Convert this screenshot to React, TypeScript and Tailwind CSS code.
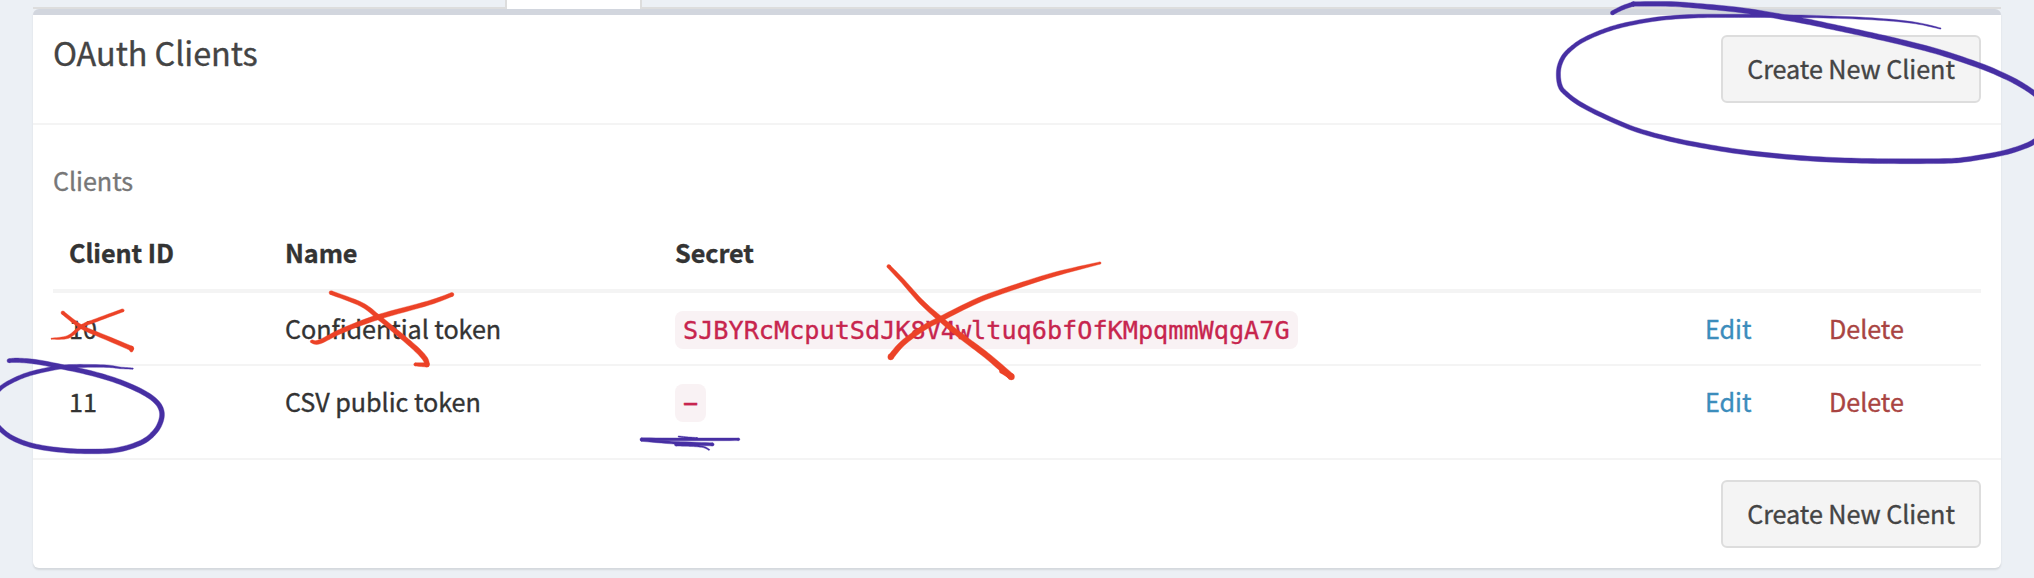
import React from "react";

type Point = [x: number, y: number, width: number];

const PURPLE = "#472fa3";
const RED = "#ec4227";

// Freehand strokes of varying thickness, each point being x, y and pen width.
const strokes: { color: string; points: Point[] }[] = [
  { color: PURPLE, points: [[1612.4, 12.9, 4], [1622, 8, 4.2], [1633.3, 4, 4.4]] },
  {
    color: PURPLE,
    points: [
      [1633.3, 4, 4.4], [1670.7, 4, 4.8], [1707, 6.7, 5], [1747, 11, 5.2], [1800.7, 20.3, 5.4], [1834, 27.2, 5.4],
      [1867, 34.3, 5.4], [1900.7, 42, 5.4], [1940.7, 52.5, 5.4], [1980.7, 66, 5.4], [2000.7, 74.3, 5.2],
      [2017.3, 82.5, 5.2], [2034, 93.3, 5], [2046, 105, 5], [2050, 118, 5], [2045, 132, 5], [2034, 141.7, 5],
      [2020.7, 147.7, 4.8], [2000.7, 153.5, 4.8], [1967, 159.3, 4.8], [1944, 161, 4.8], [1894, 161.2, 4.8],
      [1850.7, 160.5, 4.8], [1800.7, 158, 4.8], [1744, 152.3, 4.6], [1700.7, 145.4, 4.6], [1667.3, 138.5, 4.4],
      [1634, 129, 4.4], [1602, 115.3, 4.4], [1579, 103.3, 4.4], [1564.7, 92.3, 4.4], [1560, 85.5, 4.4],
      [1558.4, 75, 4.2], [1559.7, 65, 4.2], [1564.7, 55, 4.2], [1574, 46.2, 4], [1584, 39.7, 4], [1600.7, 32.2, 4],
      [1622.3, 25.4, 4], [1657, 19, 3.8], [1694, 16.2, 3.6], [1730, 15.9, 3.2], [1766, 16, 3], [1823.6, 16.8, 2.3],
      [1878, 19.2, 1.9], [1915.5, 23, 1.6], [1940.4, 28.5, 1.2],
    ],
  },
  {
    color: PURPLE,
    points: [
      [9, 360.7, 4], [18, 360.3, 4.4], [37, 362, 4.6], [63, 367, 4.6], [90, 372.9, 4.8], [117, 380.9, 4.8],
      [140, 390.7, 4.8], [154.5, 400, 4.8], [161.2, 409.5, 4.8], [161.2, 420, 4.8], [155, 431.7, 4.8],
      [141.7, 442.3, 4.8], [117, 450, 4.8], [88, 451.4, 4.6], [60, 450, 4.6], [33, 445.7, 4.6], [13, 438.3, 4.6],
      [0, 428.5, 4.4], [-9, 415, 4.4], [-9, 400, 4.2], [0, 388.7, 4], [12, 381, 4], [30, 373.7, 4],
      [57, 367.7, 3.8], [76.7, 366, 3.2], [106.7, 366.2, 2.4], [120, 367.8, 1.7], [132.7, 368.6, 1.2],
    ],
  },
  { color: PURPLE, points: [[641.5, 439.3, 3], [690, 439.4, 2.8], [738.5, 439.3, 2.6]] },
  { color: PURPLE, points: [[641.5, 440.2, 2.2], [676, 442.8, 2.8], [712.5, 444.4, 3.2]] },
  { color: PURPLE, points: [[678.7, 436.5, 1.1], [687, 437.6, 1.6], [697, 438.5, 2]] },
  { color: PURPLE, points: [[676, 444.6, 3], [690, 445.2, 2.4], [703, 446.8, 1.6], [709, 449.7, 1.2]] },
  { color: RED, points: [[62.7, 312.7, 3.4], [81.7, 327, 3.8], [106.7, 337.9, 4.2], [131.5, 348.4, 4.6]] },
  { color: RED, points: [[131.5, 348.4, 4], [131.4, 350.6, 3]] },
  { color: RED, points: [[51.5, 338.7, 1], [68.3, 336.8, 3], [81.7, 326.3, 3.2], [93.3, 321.3, 3.2], [122.7, 310.4, 3]] },
  { color: RED, points: [[331, 292.7, 3.8], [361.7, 304.6, 4.2], [379, 317.7, 4.6], [400, 335, 5], [416.7, 349.5, 5.2], [425, 358.7, 5.2], [427.2, 364.5, 4.6]] },
  { color: RED, points: [[415.4, 364.4, 3.2], [427, 364.9, 4.4]] },
  { color: RED, points: [[311.8, 341.4, 3], [319.6, 341.8, 4.2], [343, 330.3, 4.6], [378.6, 317, 5], [428.6, 303, 4.4], [452, 294.5, 3.8]] },
  { color: RED, points: [[888.7, 266.3, 3.6], [903.3, 281.7, 4.2], [921.7, 302.3, 4.8], [940.7, 319.3, 5.2], [960, 335.3, 5.6], [986.7, 355.5, 6], [1011.3, 376.7, 6.4]] },
  { color: RED, points: [[1001.5, 371, 4.4], [1009, 375.5, 4.4]] },
  { color: RED, points: [[890.7, 357, 5.8], [903, 343, 5.4], [923, 328.3, 5.2], [940.7, 318.8, 5], [976.7, 301, 5], [1006.7, 289.8, 4.8], [1053.3, 274.7, 4.2], [1100, 263, 2.2]] },
];

function spline(a: number, b: number, c: number, d: number, t: number) {
  return 0.5 * (2 * b + (c - a) * t + (2 * a - 5 * b + 4 * c - d) * t * t + (3 * b - a - 3 * c + d) * t * t * t);
}

function outline(points: Point[]) {
  const samples: Point[] = [];
  const last = points.length - 1;
  for (let i = 0; i < last; i++) {
    const p0 = points[Math.max(0, i - 1)];
    const p1 = points[i];
    const p2 = points[i + 1];
    const p3 = points[Math.min(last, i + 2)];
    for (let s = 0; s < 8; s++) {
      const t = s / 8;
      samples.push([
        spline(p0[0], p1[0], p2[0], p3[0], t),
        spline(p0[1], p1[1], p2[1], p3[1], t),
        p1[2] + (p2[2] - p1[2]) * t,
      ]);
    }
  }
  samples.push(points[last]);
  const left: string[] = [];
  const right: string[] = [];
  samples.forEach(([x, y, w], i) => {
    const before = samples[Math.max(0, i - 1)];
    const after = samples[Math.min(samples.length - 1, i + 1)];
    const dx = after[0] - before[0];
    const dy = after[1] - before[1];
    const len = Math.hypot(dx, dy) || 1;
    const nx = (-dy / len) * (w / 2);
    const ny = (dx / len) * (w / 2);
    left.push(`${(x + nx).toFixed(2)} ${(y + ny).toFixed(2)}`);
    right.unshift(`${(x - nx).toFixed(2)} ${(y - ny).toFixed(2)}`);
  });
  return `M${left.concat(right).join("L")}Z`;
}

function Markup() {
  return (
    <svg className="pointer-events-none absolute inset-0" width="2034" height="578" viewBox="0 0 2034 578" aria-hidden="true">
      {strokes.map(({ color, points }, i) => {
        const end = points[points.length - 1];
        return (
          <g key={i} fill={color} stroke={color} strokeWidth="0.4" strokeLinejoin="round">
            <path d={outline(points)} />
            <circle cx={points[0][0]} cy={points[0][1]} r={points[0][2] / 2} />
            <circle cx={end[0]} cy={end[1]} r={end[2] / 2} />
          </g>
        );
      })}
    </svg>
  );
}

function CreateButton() {
  return (
    <button className="flex h-[68px] w-[260px] items-start justify-center rounded-md border-2 border-[#ddd] bg-[#f4f4f4] pt-[11px] leading-[40px] whitespace-nowrap text-[#444]">
      Create New Client
    </button>
  );
}

const clients = [
  { id: "10", name: "Confidential token", secret: "SJBYRcMcputSdJK8V4wltuq6bfOfKMpqmmWqgA7G" },
  { id: "11", name: "CSV public token", secret: "−" },
];

const columns = "grid grid-cols-[216px_390px_1030px_124px_1fr] pl-4 pt-[15px]";

export default function App() {
  return (
    <div className="relative h-[578px] w-[2034px] overflow-hidden bg-[#ecf0f5] px-[33px] font-['Noto_Sans_CJK_JP','Noto_Sans',sans-serif] text-[25.2px] leading-[40px] tracking-[-0.06px] text-[#333] [-webkit-text-stroke:0.35px_currentColor]">
      <div className="flex h-[9px]">
        <div className="w-[472px] border-b-2 border-[#ddd]" />
        <div className="w-[137px] border-x-2 border-[#ddd] bg-white" />
        <div className="flex-1 border-b-2 border-[#ddd]" />
      </div>

      <section className="h-[559px] rounded-md border-t-[6px] border-[#d2d6de] bg-white shadow-[0_2px_2px_rgba(0,0,0,0.1)]">
        <header className="flex h-[110px] items-start justify-between border-b-2 border-[#f4f4f4] px-5 pt-5">
          <h3 className="-mt-px text-[32.4px] leading-[36px] text-[#444]">OAuth Clients</h3>
          <CreateButton />
        </header>

        <div className="h-[333px] px-5 pt-[35px]">
          <p className="text-[#777]">Clients</p>
          <div className="mt-[17px]">
            <div className={`${columns} h-[76px] border-b-4 border-[#f4f4f4] font-bold`}>
              <span>Client ID</span>
              <span>Name</span>
              <span>Secret</span>
            </div>
            {clients.map((client, i) => (
              <div key={client.id} className={`${columns} h-[73px] ${i === 0 ? "border-b-2 border-[#f4f4f4]" : ""}`}>
                <span>{client.id}</span>
                <span>{client.name}</span>
                <span>
                  <code className="rounded-lg bg-[#f9f2f4] px-2 pt-[5px] pb-1 font-['DejaVu_Sans_Mono',monospace] text-[25.2px] tracking-normal text-[#c7254e]">
                    {client.secret}
                  </code>
                </span>
                <a className="text-[#3c8dbc]">Edit</a>
                <a className="text-[#a94442]">Delete</a>
              </div>
            ))}
          </div>
        </div>

        <footer className="flex justify-end border-t-2 border-[#f4f4f4] px-5 pt-5">
          <CreateButton />
        </footer>
      </section>

      <Markup />
    </div>
  );
}
